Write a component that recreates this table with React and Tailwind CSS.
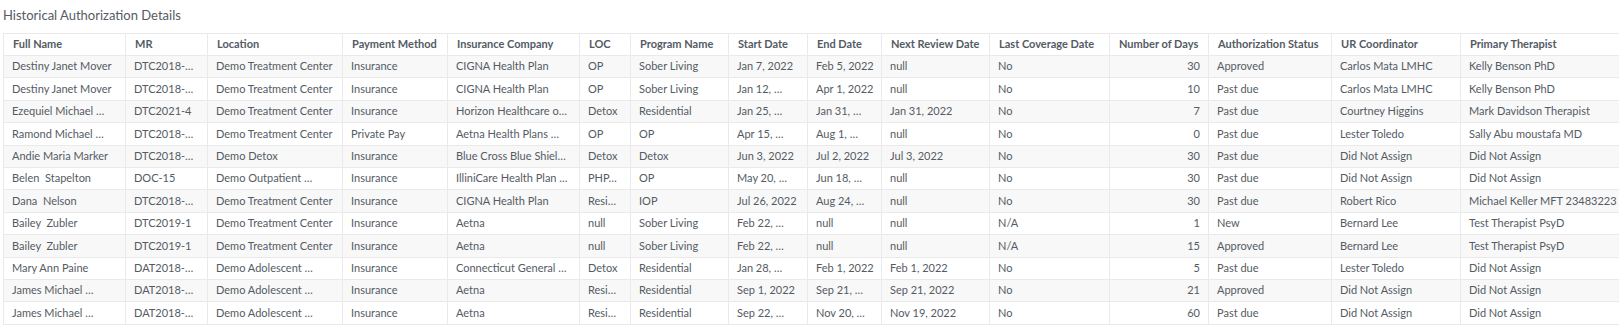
import React from "react";

const headers = ["Full Name","MR","Location","Payment Method","Insurance Company","LOC","Program Name","Start Date","End Date","Next Review Date","Last Coverage Date","Number of Days","Authorization Status","UR Coordinator","Primary Therapist"];
const widths = [122,82,135,105,132,51,98,79,74,108,120,99,123,129,220];

const rows = [
  ["Destiny Janet Mover","DTC2018-…","Demo Treatment Center","Insurance","CIGNA Health Plan","OP","Sober Living","Jan 7, 2022","Feb 5, 2022","null","No","30","Approved","Carlos Mata LMHC","Kelly Benson PhD"],
  ["Destiny Janet Mover","DTC2018-…","Demo Treatment Center","Insurance","CIGNA Health Plan","OP","Sober Living","Jan 12, …","Apr 1, 2022","null","No","10","Past due","Carlos Mata LMHC","Kelly Benson PhD"],
  ["Ezequiel Michael …","DTC2021-4","Demo Treatment Center","Insurance","Horizon Healthcare o…","Detox","Residential","Jan 25, …","Jan 31, …","Jan 31, 2022","No","7","Past due","Courtney Higgins","Mark Davidson Therapist"],
  ["Ramond Michael …","DTC2018-…","Demo Treatment Center","Private Pay","Aetna Health Plans …","OP","OP","Apr 15, …","Aug 1, …","null","No","0","Past due","Lester Toledo","Sally Abu moustafa MD"],
  ["Andie Maria Marker","DTC2018-…","Demo Detox","Insurance","Blue Cross Blue Shiel…","Detox","Detox","Jun 3, 2022","Jul 2, 2022","Jul 3, 2022","No","30","Past due","Did Not Assign","Did Not Assign"],
  ["Belen  Stapelton","DOC-15","Demo Outpatient …","Insurance","IlliniCare Health Plan …","PHP…","OP","May 20, …","Jun 18, …","null","No","30","Past due","Did Not Assign","Did Not Assign"],
  ["Dana  Nelson","DTC2018-…","Demo Treatment Center","Insurance","CIGNA Health Plan","Resi…","IOP","Jul 26, 2022","Aug 24, …","null","No","30","Past due","Robert Rico","Michael Keller MFT 23483223"],
  ["Bailey  Zubler","DTC2019-1","Demo Treatment Center","Insurance","Aetna","null","Sober Living","Feb 22, …","null","null","N/A","1","New","Bernard Lee","Test Therapist PsyD"],
  ["Bailey  Zubler","DTC2019-1","Demo Treatment Center","Insurance","Aetna","null","Sober Living","Feb 22, …","null","null","N/A","15","Approved","Bernard Lee","Test Therapist PsyD"],
  ["Mary Ann Paine","DAT2018-…","Demo Adolescent …","Insurance","Connecticut General …","Detox","Residential","Jan 28, …","Feb 1, 2022","Feb 1, 2022","No","5","Past due","Lester Toledo","Did Not Assign"],
  ["James Michael …","DAT2018-…","Demo Adolescent …","Insurance","Aetna","Resi…","Residential","Sep 1, 2022","Sep 21, …","Sep 21, 2022","No","21","Approved","Did Not Assign","Did Not Assign"],
  ["James Michael …","DAT2018-…","Demo Adolescent …","Insurance","Aetna","Resi…","Residential","Sep 22, …","Nov 20, …","Nov 19, 2022","No","60","Past due","Did Not Assign","Did Not Assign"],
];

export default function App() {
  return (
    <div className="w-[1619px] h-[325px] overflow-hidden bg-white text-[#545b64]" style={{ fontFamily: "Lato, 'Liberation Sans', sans-serif" }}>
      <div className="h-[33px] pl-[3px] pt-[6px] text-[13px] leading-[18px]">Historical Authorization Details</div>
      <div className="pl-[3px]">
        <table className="table-fixed border-collapse w-[1677px] text-[11px]">
          <colgroup>
            {widths.map((w, i) => (
              <col key={i} style={{ width: w }} />
            ))}
          </colgroup>
          <thead>
            <tr className="h-[22px] bg-white">
              {headers.map((h, i) => (
                <th key={i} className="border border-[#eaeaea] pl-[9px] pr-[4px] text-left font-bold whitespace-nowrap">{h}</th>
              ))}
            </tr>
          </thead>
          <tbody>
            {rows.map((r, ri) => (
              <tr key={ri} className={ri % 2 === 0 ? "h-[22.4px] bg-[#f8f8f8]" : "h-[22.4px] bg-white"}>
                {r.map((c, ci) => (
                  <td key={ci} className={ci === 11 ? "border border-[#eaeaea] pl-[8px] pr-[8px] text-right whitespace-pre" : "border border-[#eaeaea] pl-[8px] pr-[4px] text-left whitespace-pre"}>{c}</td>
                ))}
              </tr>
            ))}
          </tbody>
        </table>
      </div>
    </div>
  );
}
